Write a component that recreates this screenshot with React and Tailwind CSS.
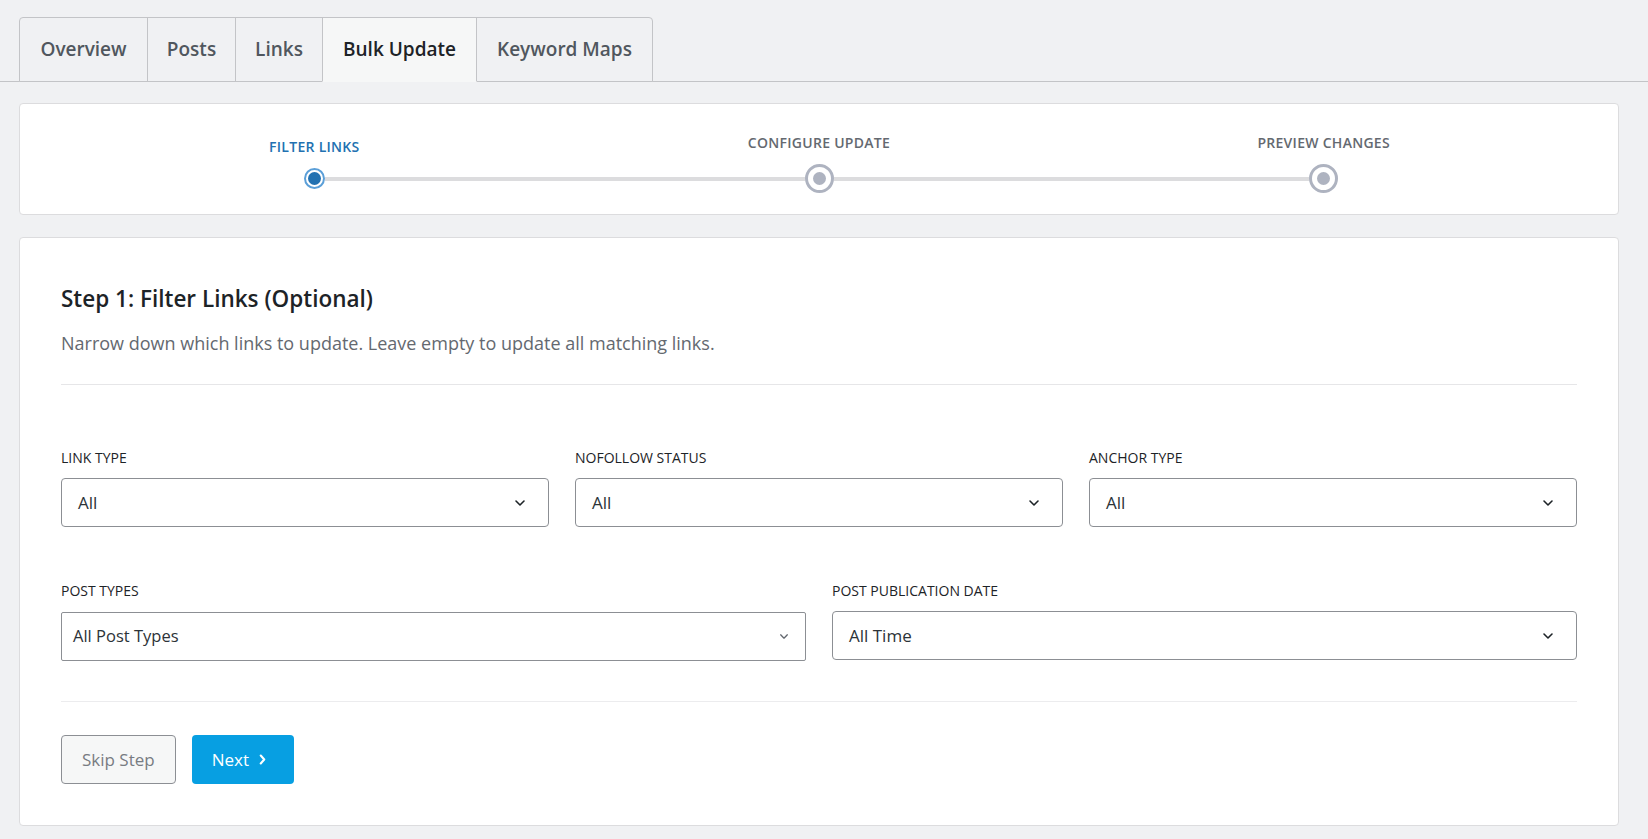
const tabs = [
  { label: "Overview", w: "w-[129px]" },
  { label: "Posts", w: "w-[89px]" },
  { label: "Links", w: "w-[88px]" },
  { label: "Bulk Update", w: "w-[155px]", active: true },
  { label: "Keyword Maps", w: "w-[177px]" },
];

const steps = [
  { label: "Filter Links", active: true },
  { label: "Configure Update" },
  { label: "Preview Changes" },
];

function Chevron({ className }) {
  return (
    <svg viewBox="0 0 12 8" className={className} fill="none" stroke="currentColor" strokeWidth="1.6" strokeLinecap="round" strokeLinejoin="round">
      <path d="M2 2l4 4 4-4" />
    </svg>
  );
}

function Select({ label, value }) {
  return (
    <div className="flex flex-col">
      <label className="text-[14px] leading-5 text-[#1d2327] uppercase">{label}</label>
      <div className="mt-[10px] h-[49px] flex items-center justify-between border border-[#8c8f94] rounded-[4px] bg-white pl-4 pr-[22px]">
        <span className="text-[17px] text-[#2c3338]">{value}</span>
        <Chevron className="w-[12px] h-[8px] text-[#1d2327]" />
      </div>
    </div>
  );
}

function StepNode({ active }) {
  if (active) {
    return (
      <div className="w-[21px] h-[21px] rounded-full border-[2px] border-[#5b9fd8] bg-white flex items-center justify-center shrink-0">
        <div className="w-[13px] h-[13px] rounded-full bg-[#2271b1]" />
      </div>
    );
  }
  return (
    <div className="w-[29px] h-[29px] rounded-full border-[3px] border-[#aeb3c0] bg-white flex items-center justify-center shrink-0">
      <div className="w-[13px] h-[13px] rounded-full bg-[#aeb3c0]" />
    </div>
  );
}

export default function App() {
  return (
    <div className="min-h-screen bg-[#f0f1f3] font-['Open_Sans',sans-serif] pb-4">
      {/* tab strip */}
      <div className="pt-[17px] pl-[19px] border-b border-[#c3c4c7] flex">
        {tabs.map((t, i) => (
          <div
            key={t.label}
            className={`${t.w} h-[65px] -mb-px flex items-center justify-center border border-[#c3c4c7] text-[19px] font-semibold ${
              i > 0 ? "-ml-px" : "rounded-tl-[4px]"
            } ${i === tabs.length - 1 ? "rounded-tr-[4px]" : ""} ${
              t.active ? "bg-[#f6f7f7] border-b-[#f6f7f7] text-[#1d2327] relative z-10" : "bg-[#f0f1f3] text-[#50575e]"
            }`}
          >
            {t.label}
          </div>
        ))}
      </div>

      {/* progress */}
      <div className="ml-[19px] mr-[29px] mt-[21px] bg-white border border-[#dcdcde] rounded-[4px] px-[42px] pt-[29px] pb-[21px] grid grid-cols-3">
        {steps.map((s, i) => (
          <div key={s.label} className="flex flex-col items-center">
            <div
              className={`text-[14px] leading-5 font-semibold uppercase tracking-[0.02em] ${
                s.active ? "text-[#2271b1] mt-1 mb-[7px]" : "text-[#646970] mb-[11px]"
              }`}
            >
              {s.label}
            </div>
            <div className="w-full h-[29px] flex items-center">
              <div className={`flex-1 h-[4px] ${i === 0 ? "" : "bg-[#dcdcde]"}`} />
              <StepNode active={s.active} />
              <div className={`flex-1 h-[4px] ${i === steps.length - 1 ? "" : "bg-[#dcdcde]"}`} />
            </div>
          </div>
        ))}
      </div>

      {/* step body */}
      <div className="ml-[19px] mr-[29px] mt-[22px] bg-white border border-[#dcdcde] rounded-[4px] px-[41px] pt-[47px] pb-[41px]">
        <h2 className="text-[22.5px] leading-7 font-semibold text-[#1d2327]">Step 1: Filter Links (Optional)</h2>
        <p className="mt-[18px] text-[18px] leading-6 text-[#646970]">
          Narrow down which links to update. Leave empty to update all matching links.
        </p>
        <hr className="mt-[29px] border-0 border-t border-[#e6e6e8]" />

        <div className="mt-[63px] grid grid-cols-3 gap-x-[26px]">
          <Select label="Link Type" value="All" />
          <Select label="Nofollow Status" value="All" />
          <Select label="Anchor Type" value="All" />
        </div>

        <div className="mt-[54px] grid grid-cols-2 gap-x-[26px]">
          <div className="flex flex-col">
            <label className="text-[14px] leading-5 text-[#1d2327] uppercase">Post Types</label>
            <div className="mt-[11px] h-[49px] flex items-center justify-between border border-[#8c8f94] rounded-[2px] bg-white pl-[11px] pr-[16px]">
              <span className="text-[16.5px] text-[#2c3338]">All Post Types</span>
              <Chevron className="w-[10px] h-[7px] text-[#646970]" />
            </div>
          </div>
          <Select label="Post Publication Date" value="All Time" />
        </div>

        <hr className="mt-[40px] border-0 border-t border-[#ececee]" />

        <div className="mt-[33px] flex gap-4">
          <button className="h-[49px] px-5 rounded-[4px] border border-[#8c8f94] bg-[#f6f7f7] text-[17px] text-[#787c82]">
            Skip Step
          </button>
          <button className="h-[49px] pl-5 pr-7 rounded-[4px] bg-[#079fe2] text-[17px] text-white flex items-center gap-[10px]">
            Next
            <svg viewBox="0 0 8 12" className="w-[7px] h-[11px]" fill="none" stroke="currentColor" strokeWidth="2.4" strokeLinecap="round" strokeLinejoin="round">
              <path d="M2 1.5L6 6l-4 4.5" />
            </svg>
          </button>
        </div>
      </div>
    </div>
  );
}
